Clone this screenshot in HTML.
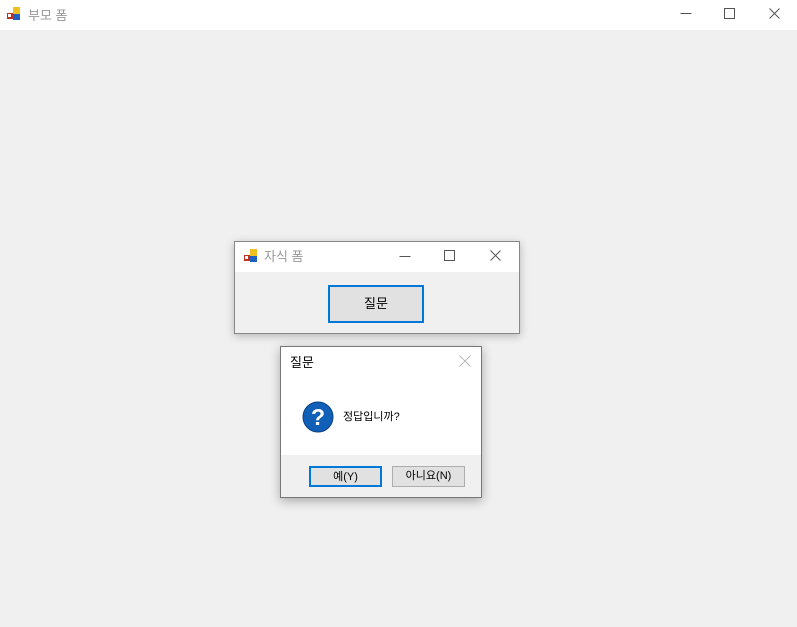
<!DOCTYPE html>
<html><head><meta charset="utf-8"><style>
*{margin:0;padding:0;box-sizing:border-box}
body{width:797px;height:627px;background:#f0f0f0;position:relative;overflow:hidden;font-family:"Liberation Sans","Malgun Gothic","Noto Sans CJK KR",sans-serif;}
.abs{position:absolute}
.t{color:#999;font-size:12px}
.k{font-size:12px;color:#000}
</style></head><body>
<div class="abs" style="left:0;top:0;width:797px;height:30px;background:#fff"></div>
<svg class="abs" style="left:7px;top:7px" width="14" height="14"><rect x="0" y="6" width="6" height="6" fill="#c03020"/><rect x="6" y="0" width="7" height="7" fill="#f0c020"/><rect x="6" y="7" width="7" height="6" fill="#2060c0"/><rect x="1" y="7" width="3" height="3" fill="#fff"/></svg>
<div class="abs t" style="left:28px;top:5px;font-size:13px">부모 폼</div>
<svg class="abs" style="left:670px;top:0" width="127" height="30" stroke="#555" fill="none" stroke-width="1"><path d="M10.5 13.5h11"/><rect x="54.5" y="8.5" width="10" height="10"/><path d="M99.5 8.5l10 10M109.5 8.5l-10 10"/></svg>

<div class="abs" style="left:234px;top:241px;width:286px;height:93px;background:#f0f0f0;border:1px solid #888;box-shadow:0 2px 8px rgba(0,0,0,.25)"></div>
<div class="abs" style="left:235px;top:242px;width:284px;height:30px;background:#fff"></div>
<svg class="abs" style="left:244px;top:249px" width="14" height="14"><rect x="0" y="6" width="6" height="6" fill="#c03020"/><rect x="6" y="0" width="7" height="7" fill="#f0c020"/><rect x="6" y="7" width="7" height="6" fill="#2060c0"/><rect x="1" y="7" width="3" height="3" fill="#fff"/></svg>
<div class="abs t" style="left:264px;top:246px;font-size:13px">자식 폼</div>
<svg class="abs" style="left:390px;top:245px" width="120" height="22" stroke="#555" fill="none"><path d="M9.5 11.5h11"/><rect x="54.5" y="5.5" width="10" height="10"/><path d="M100.5 5.5l10 10M110.5 5.5l-10 10"/></svg>
<div class="abs k" style="left:328px;top:285px;width:96px;height:38px;background:#e1e1e1;border:2px solid #0078d7;text-align:center;line-height:34px;font-size:13px">질문</div>

<div class="abs" style="left:280px;top:346px;width:202px;height:152px;background:#f0f0f0;border:1px solid #777;box-shadow:0 3px 10px rgba(0,0,0,.3)"></div>
<div class="abs" style="left:281px;top:347px;width:200px;height:108px;background:#fff"></div>
<div class="abs" style="left:290px;top:352px;font-size:13px">질문</div>
<svg class="abs" style="left:459px;top:355px" width="12" height="12" stroke="#bbb"><path d="M0.5 0.5l11 11M11.5 0.5l-11 11"/></svg>
<svg class="abs" style="left:302px;top:401px" width="32" height="32"><circle cx="16" cy="16" r="15" fill="#1060b8" stroke="#0a3f80"/><text x="16" y="24" text-anchor="middle" fill="#fff" font-size="23" font-weight="bold" font-family="Liberation Sans">?</text></svg>
<div class="abs k" style="left:343px;top:408px;font-size:11px">정답입니까?</div>
<div class="abs k" style="left:309px;top:466px;width:73px;height:21px;background:#e1e1e1;border:2px solid #0078d7;text-align:center;line-height:19px;font-size:11px">예(Y)</div>
<div class="abs k" style="left:392px;top:466px;width:73px;height:21px;background:#e1e1e1;border:1px solid #adadad;text-align:center;line-height:19px;font-size:11px">아니요(N)</div>
</body></html>
